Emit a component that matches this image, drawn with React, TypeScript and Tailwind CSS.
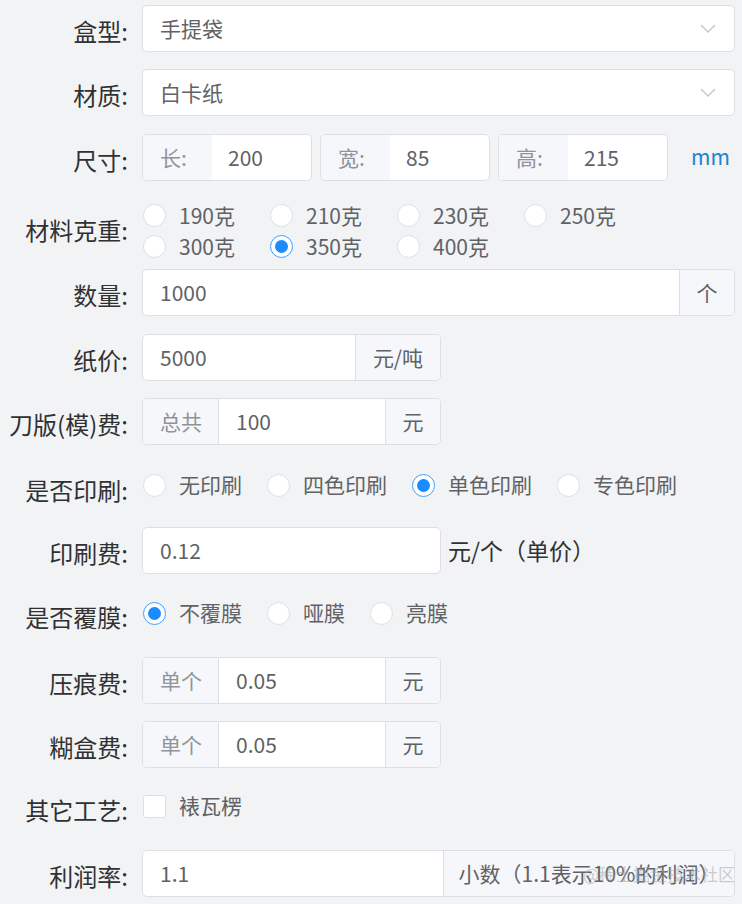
import type { ReactNode } from "react";

const font = { fontFamily: '"Noto Sans CJK SC", "Noto Sans", sans-serif' };

function Label({ children, className = "" }: { children: ReactNode; className?: string }) {
  return (
    <div className={`h-[47px] w-[128px] shrink-0 text-right text-[24px] leading-[51px] text-[#303133] ${className}`}>
      {children}
    </div>
  );
}

function Chevron() {
  return (
    <svg width="16" height="9" viewBox="0 0 16 9" fill="none" className="mr-[18px]">
      <polyline points="1,1 8,8 15,1" stroke="#c0c4cc" strokeWidth="1.3" />
    </svg>
  );
}

function Select({ value }: { value: string }) {
  return (
    <div className="ml-[14px] flex h-[47px] w-[593px] items-center justify-between rounded-[5px] border border-[#dcdfe6] bg-white pl-[17px] text-[21px] text-[#606266]">
      <span>{value}</span>
      <Chevron />
    </div>
  );
}

function SizeBox({ prefix, value }: { prefix: string; value: string }) {
  return (
    <div className="flex h-[47px] w-[170px] overflow-hidden rounded-[5px] border border-[#dcdfe6] bg-white text-[21px]">
      <div className="flex w-[69px] items-center bg-[#f5f7fa] pl-[17px] text-[#909399]">{prefix}</div>
      <div className="flex items-center pl-[16px] text-[#606266]">{value}</div>
    </div>
  );
}

function Radio({ label, checked = false, className = "" }: { label: string; checked?: boolean; className?: string }) {
  return (
    <div className={`flex items-center ${className}`}>
      <span
        className={`flex h-[23px] w-[23px] shrink-0 items-center justify-center rounded-full border bg-white ${
          checked ? "border-[#409eff]" : "border-[#dcdfe6]"
        }`}
      >
        {checked ? <span className="h-[13px] w-[13px] rounded-full bg-[#1a8cff]" /> : null}
      </span>
      <span className="ml-[13px] text-[21px] text-[#606266]">{label}</span>
    </div>
  );
}

function GroupInput({
  prefix,
  value,
  suffix,
  width,
  suffixWidth,
}: {
  prefix?: string;
  value: string;
  suffix?: string;
  width: string;
  suffixWidth?: string;
}) {
  return (
    <div className={`ml-[14px] flex h-[47px] overflow-hidden rounded-[5px] border border-[#dcdfe6] bg-white text-[21px] ${width}`}>
      {prefix ? (
        <div className="flex w-[76px] shrink-0 items-center border-r border-[#dcdfe6] bg-[#f5f7fa] pl-[17px] text-[#909399]">
          {prefix}
        </div>
      ) : null}
      <div className="flex flex-1 items-center pl-[17px] text-[#606266]">{value}</div>
      {suffix ? (
        <div
          className={`flex shrink-0 items-center justify-center border-l border-[#dcdfe6] bg-[#f5f7fa] text-[#606266] ${suffixWidth}`}
        >
          {suffix}
        </div>
      ) : null}
    </div>
  );
}

export default function App() {
  return (
    <div className="relative min-h-[904px] w-[742px] bg-[#f2f3f5] pt-[5px]" style={font}>
      {/* 盒型 */}
      <div className="flex">
        <Label>盒型:</Label>
        <Select value="手提袋" />
      </div>

      {/* 材质 */}
      <div className="mt-[17px] flex">
        <Label>材质:</Label>
        <Select value="白卡纸" />
      </div>

      {/* 尺寸 */}
      <div className="mt-[18px] flex">
        <Label>尺寸:</Label>
        <div className="ml-[14px] flex gap-[8px]">
          <SizeBox prefix="长:" value="200" />
          <SizeBox prefix="宽:" value="85" />
          <SizeBox prefix="高:" value="215" />
        </div>
        <div className="ml-[23px] text-[21px] leading-[44px] text-[#1f84cf]">mm</div>
      </div>

      {/* 材料克重 */}
      <div className="mt-[19px] flex">
        <Label className="mt-[4px]">材料克重:</Label>
        <div className="ml-[15px] flex w-[593px] flex-wrap">
          {[
            ["190克", false],
            ["210克", false],
            ["230克", false],
            ["250克", false],
            ["300克", false],
            ["350克", true],
            ["400克", false],
          ].map(([l, c]) => (
            <Radio key={l as string} label={l as string} checked={c as boolean} className="h-[31px] w-[127px]" />
          ))}
        </div>
      </div>

      {/* 数量 */}
      <div className="mt-[7px] flex">
        <Label>数量:</Label>
        <GroupInput value="1000" suffix="个" width="w-[593px]" suffixWidth="w-[55px]" />
      </div>

      {/* 纸价 */}
      <div className="mt-[18px] flex">
        <Label>纸价:</Label>
        <GroupInput value="5000" suffix="元/吨" width="w-[299px]" suffixWidth="w-[85px]" />
      </div>

      {/* 刀版费 */}
      <div className="mt-[17px] flex">
        <Label>刀版(模)费:</Label>
        <GroupInput prefix="总共" value="100" suffix="元" width="w-[299px]" suffixWidth="w-[55px]" />
      </div>

      {/* 是否印刷 */}
      <div className="mt-[19px] flex">
        <Label>是否印刷:</Label>
        <div className="ml-[15px] flex h-[42px] items-center">
          <Radio label="无印刷" className="mr-[25px]" />
          <Radio label="四色印刷" className="mr-[25px]" />
          <Radio label="单色印刷" checked className="mr-[25px]" />
          <Radio label="专色印刷" />
        </div>
      </div>

      {/* 印刷费 */}
      <div className="mt-[16px] flex">
        <Label>印刷费:</Label>
        <GroupInput value="0.12" width="w-[299px]" />
        <div className="ml-[7px] text-[23px] leading-[46px] text-[#303133]">元/个（单价）</div>
      </div>

      {/* 是否覆膜 */}
      <div className="mt-[17px] flex">
        <Label>是否覆膜:</Label>
        <div className="ml-[15px] flex h-[44px] items-center">
          <Radio label="不覆膜" checked className="mr-[25px]" />
          <Radio label="哑膜" className="mr-[25px]" />
          <Radio label="亮膜" />
        </div>
      </div>

      {/* 压痕费 */}
      <div className="mt-[19px] flex">
        <Label>压痕费:</Label>
        <GroupInput prefix="单个" value="0.05" suffix="元" width="w-[299px]" suffixWidth="w-[55px]" />
      </div>

      {/* 糊盒费 */}
      <div className="mt-[17px] flex">
        <Label>糊盒费:</Label>
        <GroupInput prefix="单个" value="0.05" suffix="元" width="w-[299px]" suffixWidth="w-[55px]" />
      </div>

      {/* 其它工艺 */}
      <div className="mt-[16px] flex">
        <Label>其它工艺:</Label>
        <div className="ml-[15px] flex h-[44px] items-center">
          <span className="h-[23px] w-[23px] rounded-[3px] border border-[#dcdfe6] bg-white" />
          <span className="ml-[13px] text-[21px] text-[#606266]">裱瓦楞</span>
        </div>
      </div>

      {/* 利润率 */}
      <div className="mt-[19px] flex">
        <Label>利润率:</Label>
        <GroupInput value="1.1" suffix="小数（1.1表示10%的利润）" width="w-[593px]" suffixWidth="w-[291px]" />
      </div>

      <div className="pointer-events-none absolute left-[583px] top-[861px] text-[17px] text-[#a0a0a0]/50">
        @稀土掘金技术社区
      </div>
    </div>
  );
}
